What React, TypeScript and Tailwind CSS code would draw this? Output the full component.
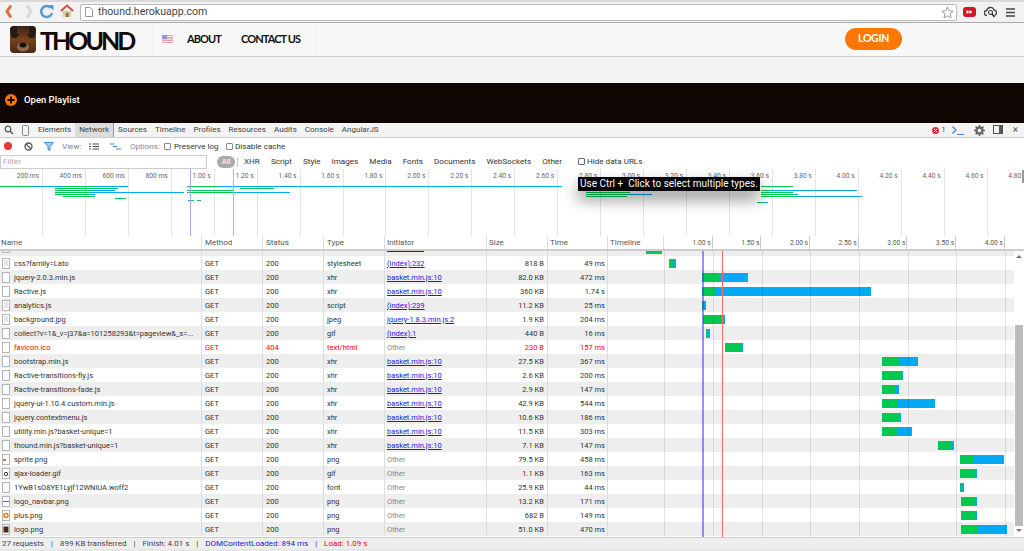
const UI_FONT = 'font-["Roboto",sans-serif]';

type Row = {
  name: string;
  status?: number;
  type: string;
  initiator: string;
  size: string;
  time: string;
  start: number;
  green: number;
  end: number;
  icon?: 'lines' | 'sprite' | 'loader' | 'navbar' | 'plus' | 'logo';
};

const ROWS: Row[] = [
  { name: 'css?family=Lato', type: 'stylesheet', initiator: '(index):232', size: '818 B', time: '49 ms', start: 669, green: 674, end: 676, icon: 'lines' },
  { name: 'jquery-2.0.3.min.js', type: 'xhr', initiator: 'basket.min.js:10', size: '82.0 KB', time: '472 ms', start: 702, green: 720, end: 748 },
  { name: 'Ractive.js', type: 'xhr', initiator: 'basket.min.js:10', size: '360 KB', time: '1.74 s', start: 702, green: 716, end: 871 },
  { name: 'analytics.js', type: 'script', initiator: '(index):239', size: '11.2 KB', time: '25 ms', start: 702, green: 703, end: 706, icon: 'lines' },
  { name: 'background.jpg', type: 'jpeg', initiator: 'jquery-1.8.3.min.js:2', size: '1.9 KB', time: '204 ms', start: 703, green: 723, end: 725, icon: 'lines' },
  { name: 'collect?v=1&_v=j37&a=101258293&t=pageview&_s=...', type: 'gif', initiator: '(index):1', size: '440 B', time: '16 ms', start: 706, green: 707, end: 710 },
  { name: 'favicon.ico', status: 404, type: 'text/html', initiator: 'Other', size: '230 B', time: '157 ms', start: 725, green: 742, end: 743 },
  { name: 'bootstrap.min.js', type: 'xhr', initiator: 'basket.min.js:10', size: '27.5 KB', time: '367 ms', start: 882, green: 900, end: 918 },
  { name: 'Ractive-transitions-fly.js', type: 'xhr', initiator: 'basket.min.js:10', size: '2.6 KB', time: '200 ms', start: 882, green: 901, end: 903 },
  { name: 'Ractive-transitions-fade.js', type: 'xhr', initiator: 'basket.min.js:10', size: '2.9 KB', time: '147 ms', start: 882, green: 896, end: 899 },
  { name: 'jquery-ui-1.10.4.custom.min.js', type: 'xhr', initiator: 'basket.min.js:10', size: '42.9 KB', time: '544 ms', start: 882, green: 897, end: 935 },
  { name: 'jquery.contextmenu.js', type: 'xhr', initiator: 'basket.min.js:10', size: '10.6 KB', time: '186 ms', start: 882, green: 899, end: 901 },
  { name: 'utility.min.js?basket-unique=1', type: 'xhr', initiator: 'basket.min.js:10', size: '11.5 KB', time: '303 ms', start: 882, green: 898, end: 912 },
  { name: 'thound.min.js?basket-unique=1', type: 'xhr', initiator: 'basket.min.js:10', size: '7.1 KB', time: '147 ms', start: 938, green: 952, end: 954 },
  { name: 'sprite.png', type: 'png', initiator: 'Other', size: '79.5 KB', time: '458 ms', start: 960, green: 973, end: 1004, icon: 'sprite' },
  { name: 'ajax-loader.gif', type: 'gif', initiator: 'Other', size: '1.1 KB', time: '163 ms', start: 960, green: 975, end: 977, icon: 'loader' },
  { name: '1YwB1sO8YE1Lyjf12WNiUA.woff2', type: 'font', initiator: 'Other', size: '25.9 KB', time: '44 ms', start: 960, green: 961, end: 964 },
  { name: 'logo_navbar.png', type: 'png', initiator: 'Other', size: '13.2 KB', time: '171 ms', start: 961, green: 975, end: 977, icon: 'navbar' },
  { name: 'plus.png', type: 'png', initiator: 'Other', size: '682 B', time: '149 ms', start: 961, green: 975, end: 977, icon: 'plus' },
  { name: 'logo.png', type: 'png', initiator: 'Other', size: '51.0 KB', time: '470 ms', start: 961, green: 978, end: 1007, icon: 'logo' },
];

const TABS = ['Elements', 'Network', 'Sources', 'Timeline', 'Profiles', 'Resources', 'Audits', 'Console', 'AngularJS'];
const TYPES = ['XHR', 'Script', 'Style', 'Images', 'Media', 'Fonts', 'Documents', 'WebSockets', 'Other'];

const OVERVIEW_LABELS = Array.from({ length: 24 }, (_, i) => {
  const ms = (i + 1) * 200;
  return ms < 1000 ? `${ms} ms` : `${(ms / 1000).toFixed(2)} s`;
});

// y, x1, x2, colour of the overview strokes
const G = '#00c853';
const B = '#03a9f4';
const OVERVIEW_STROKES: [number, number, number, string][] = [
  [186, 0, 32, G], [186, 32, 128, B], [186, 63, 93, G], [186, 187, 562, B], [186, 187, 218, G],
  [188, 55, 118, B], [188, 55, 115, G], [188, 240, 274, G],
  [190, 55, 115, B], [190, 55, 90, G], [190, 187, 233, G],
  [192, 55, 184, B], [192, 55, 90, G], [192, 187, 290, B], [192, 187, 233, G], [192, 586, 630, B], [192, 586, 630, G],
  [194, 55, 95, B], [194, 55, 90, G], [194, 586, 652, B], [194, 586, 627, G],
  [196, 63, 95, G], [196, 586, 627, G],
  [198, 115, 126, G], [200, 188, 194, G], [200, 197, 201, G],
  [186, 761, 793, G], [190, 761, 857, B], [190, 761, 772, G], [192, 761, 793, G], [194, 761, 798, B], [194, 761, 793, G],
  [196, 761, 862, B], [196, 761, 798, G], [202, 762, 768, B], [202, 757, 762, G],
];

const WATERFALL_LABELS = ['1.00 s', '1.50 s', '2.00 s', '2.50 s', '3.00 s', '3.50 s', '4.00 s'];
const WATERFALL_GRID = [664, 713, 762, 810, 859, 908, 956, 1005];

function FileIcon({ kind }: { kind?: Row['icon'] }) {
  return (
    <svg width="9" height="11" viewBox="0 0 9 11" className="shrink-0">
      <rect x="0.5" y="0.5" width="7" height="10" fill="#fff" stroke="#b5b5b5" />
      {kind === 'lines' && (
        <path d="M2 3h4M2 5h4M2 7h4" stroke="#ccc" />
      )}
      {kind === 'sprite' && <path d="M1 6h3" stroke="#e03030" strokeWidth="1.5" />}
      {kind === 'loader' && <circle cx="4" cy="6" r="1.7" fill="none" stroke="#333" />}
      {kind === 'navbar' && <path d="M1 5.5h6" stroke="#666" />}
      {kind === 'plus' && <circle cx="4" cy="5.5" r="2" fill="none" stroke="#f57c00" strokeWidth="1.5" />}
      {kind === 'logo' && <rect x="1.5" y="2.5" width="5" height="6" fill="#4a2a12" />}
    </svg>
  );
}

function BrowserBar() {
  return (
    <div className="flex h-[23px] shrink-0 items-center border-b border-[#aaa] border-t-2 border-t-[#d9d9d9] bg-[#f2f2f2]">
      <div className="flex w-[80px] shrink-0 items-center">
        <svg width="80" height="20" viewBox="0 0 80 20">
          <path d="M11 3.5 7 9.5l4 6" fill="none" stroke="#d9733f" strokeWidth="3" />
          <path d="M27 3.5l4 6-4 6" fill="none" stroke="#d8d8d8" strokeWidth="3" />
          <path d="M51 6a5.5 5.5 0 1 0 1 5" fill="none" stroke="#5b9bd5" strokeWidth="2.6" />
          <path d="M48 3l5.5 0 0 5.5z" fill="#5b9bd5" />
          <path d="M61 9l6-5.500 6 5.500" fill="none" stroke="#c9503c" strokeWidth="2" />
          <rect x="63" y="9" width="8" height="6" fill="#d9c9a8" />
          <rect x="66" y="11" width="2.500" height="4" fill="#8a6a3a" />
        </svg>
      </div>
      <div className="flex h-[17px] w-[877px] shrink-0 items-center rounded-[2px] border border-[#bbb] bg-white pl-[4px] pr-[1px]">
        <svg width="8" height="10" viewBox="0 0 8 10" className="mr-[5px] shrink-0">
          <path d="M.5.500h4.500l2.500 2.500v6.500h-7z" fill="#fff" stroke="#999" />
        </svg>
        <span className='font-["Roboto",sans-serif] text-[10.600px] leading-none text-[#444]'>thound.herokuapp.com</span>
        <svg width="13" height="13" viewBox="0 0 24 24" className="ml-auto mr-[1px]">
          <path d="m12 2 3 7 7.500.7-5.700 5 1.700 7.300-6.500-3.900L5.500 22l1.700-7.300-5.700-5L9 9z" fill="#fff" stroke="#888" strokeWidth="1.500" />
        </svg>
      </div>
      <div className="ml-[6px] flex items-center">
        <svg width="13" height="10" viewBox="0 0 13 10">
          <rect width="13" height="10" rx="3" fill="#d3142a" />
          <path d="M3.500 3v4l3-2zM6.500 3v4l3-2z" fill="#fff" />
        </svg>
        <svg width="13" height="12" viewBox="0 0 13 12" className="ml-[8px]">
          <path d="M3 9.500a2.500 2.500 0 0 1-.3-5 3.800 3.800 0 0 1 7.300-.5 2.700 2.700 0 0 1 .5 5.300" fill="none" stroke="#444" strokeWidth="1.300" />
          <circle cx="6.500" cy="6.500" r="2" fill="none" stroke="#444" strokeWidth="1.200" />
          <path d="m8 8 2.500 3" stroke="#222" strokeWidth="1.300" />
        </svg>
        <svg width="9" height="9" viewBox="0 0 9 9" className="ml-[9px]">
          <path d="M0 1h9M0 4.500h9M0 8h9" stroke="#444" strokeWidth="1.700" />
        </svg>
      </div>
    </div>
  );
}

function SiteHeader() {
  return (
    <>
      <div className="flex h-[34px] shrink-0 items-center border-b border-[#ccc] bg-[#f8f8f8] font-['Lato',sans-serif]">
        <div className="flex h-full w-[153px] shrink-0 items-center border-r border-[#f2f2f2] pl-[10px]">
          <svg width="26" height="27" viewBox="0 0 26 27" className="shrink-0">
            <defs>
              <linearGradient id="dog" x1="0" y1="0" x2="0" y2="1">
                <stop offset="0" stopColor="#3a2415" />
                <stop offset="0.5" stopColor="#7a421c" />
                <stop offset="1" stopColor="#4a2812" />
              </linearGradient>
            </defs>
            <rect width="26" height="27" rx="4" fill="url(#dog)" />
            <path d="M0 4q0-4 4-4h3v12H2z" fill="#2a1a10" />
            <path d="M26 4q0-4-4-4h-3v12h5z" fill="#2a1a10" />
            <ellipse cx="13" cy="21" rx="6" ry="4.500" fill="#8a6a50" />
            <ellipse cx="13" cy="19" rx="3.500" ry="2.500" fill="#111" />
            <circle cx="8" cy="9" r="1" fill="#111" />
            <circle cx="18" cy="9" r="1" fill="#111" />
          </svg>
          <span className="ml-[4px] pt-[2px] text-[25px] font-bold leading-none tracking-[-3px] text-[#120806]">THOUND</span>
        </div>
        <div className="flex h-full w-[164px] shrink-0 items-center border-r border-[#f2f2f2] pb-[1px] pl-[9px] text-[11px] font-bold tracking-[-0.9px] text-[#111]">
          <svg width="11" height="8" viewBox="0 0 11 8" className="shrink-0">
            <rect width="11" height="8" fill="#e8a0a0" />
            <path d="M0 1.500h11M0 4h11M0 6.500h11" stroke="#f5f0f0" />
            <rect width="5" height="4" fill="#8a9ad0" />
          </svg>
          <span className="ml-[14px]">ABOUT</span>
          <span className="ml-[20px]">CONTACT US</span>
        </div>
        <div className="ml-[528px] mb-[1px] flex h-[22px] w-[57px] items-center justify-center rounded-full bg-[#ff7600] text-[10.500px] font-bold tracking-[-0.3px] text-white">
          LOGIN
        </div>
      </div>
      <div className="h-[26px] shrink-0 bg-[#f3f3f3]" />
      <div className="flex h-[40px] shrink-0 items-center bg-[#100604] pb-[6px] pl-[5px] font-['Roboto',sans-serif]">
        <svg width="12" height="12" viewBox="0 0 12 12">
          <circle cx="6" cy="6" r="6" fill="#f57600" />
          <path d="M6 2.500v7M2.500 6h7" stroke="#100604" strokeWidth="1.800" />
        </svg>
        <span className="ml-[7px] text-[9.500px] font-medium text-white">Open Playlist</span>
      </div>
    </>
  );
}

function TabBar() {
  return (
    <div className="flex h-[15px] shrink-0 items-center border-b border-[#ccc] bg-[#f3f3f3] text-[8px] text-[#444]">
      <svg width="10" height="10" viewBox="0 0 10 10" className="ml-[4px] shrink-0">
        <circle cx="4" cy="4" r="2.800" fill="none" stroke="#555" strokeWidth="1.200" />
        <path d="m6 6 3 3" stroke="#555" strokeWidth="1.400" />
      </svg>
      <svg width="7" height="11" viewBox="0 0 7 11" className="ml-[8px] shrink-0">
        <rect x="0.500" y="0.500" width="6" height="10" rx="1" fill="none" stroke="#888" />
      </svg>
      <div className="ml-[9px] flex h-full items-center">
        {TABS.map((tab) => (
          <span
            key={tab}
            className={
              tab === 'Network'
                ? '-ml-[4px] mr-[4px] flex h-full items-center border-r border-[#999] bg-[#dcdcdc] px-[4px]'
                : 'mr-[8px] flex h-full items-center'
            }
          >
            {tab}
          </span>
        ))}
      </div>
      <div className="ml-auto flex items-center pr-[6px]">
        <svg width="7" height="7" viewBox="0 0 7 7">
          <circle cx="3.500" cy="3.500" r="3.500" fill="#e0303a" />
          <path d="m2 2 3 3M5 2 2 5" stroke="#fff" />
        </svg>
        <span className="ml-[2px] text-[#555]">1</span>
        <svg width="12" height="9" viewBox="0 0 12 9" className="ml-[6px]">
          <path d="m.5.500 3.500 3.500L.5 7.500" fill="none" stroke="#3f7fe0" strokeWidth="1.200" />
          <path d="M5 8.500h7" stroke="#3f7fe0" />
        </svg>
        <svg width="11" height="11" viewBox="0 0 11 11" className="ml-[10px]">
          <circle cx="5.500" cy="5.500" r="3" fill="none" stroke="#666" strokeWidth="2.400" />
          <path d="M5.500 0v2M5.500 9v2M0 5.500h2M9 5.500h2M1.600 1.600 3 3M8 8l1.400 1.400M9.400 1.600 8 3M3 8 1.600 9.400" stroke="#666" strokeWidth="1.500" />
        </svg>
        <svg width="10" height="10" viewBox="0 0 10 10" className="ml-[8px]">
          <rect x="0.500" y="0.500" width="9" height="8" fill="none" stroke="#555" />
          <rect x="6" y="1" width="3" height="7" fill="#555" />
        </svg>
        <span className="ml-[10px] text-[10px] leading-none text-[#555]">×</span>
      </div>
    </div>
  );
}

function ToolBar() {
  return (
    <div className="flex h-[16px] shrink-0 items-center whitespace-nowrap bg-white text-[8.100px] text-[#333]">
      <span className="ml-[4px] h-[8px] w-[8px] shrink-0 rounded-full bg-[#e53935]" />
      <svg width="9" height="9" viewBox="0 0 9 9" className="ml-[12px] shrink-0">
        <circle cx="4.500" cy="4.500" r="3.500" fill="none" stroke="#555" strokeWidth="1.300" />
        <path d="m2 2 5 5" stroke="#555" strokeWidth="1.300" />
      </svg>
      <svg width="10" height="9" viewBox="0 0 10 9" className="ml-[11px] shrink-0">
        <path d="M.5.500h9L6 4.500V8.500L4 7.500v-3z" fill="#a8cdf0" stroke="#3f8fe0" />
      </svg>
      <span className="ml-[8px] w-[20px] shrink-0 text-[#888]">View:</span>
      <svg width="10" height="7" viewBox="0 0 10 7" className="ml-[7px] shrink-0">
        <path d="M0 1h2M0 3.500h2M0 6h2M3.500 1H10M3.500 3.500H10M3.500 6H10" stroke="#444" strokeWidth="1.200" />
      </svg>
      <svg width="11" height="7" viewBox="0 0 11 7" className="ml-[11px] shrink-0">
        <path d="M0 1h4M3 3.500h4M6 6h5" stroke="#3f7fe0" strokeWidth="1.200" />
      </svg>
      <span className="ml-[9px] w-[30px] shrink-0 text-[#888]">Options:</span>
      <span className="ml-[4px] h-[7px] w-[7px] shrink-0 rounded-[1px] border border-[#888]" />
      <span className="ml-[3px] w-[45px] shrink-0">Preserve log</span>
      <span className="ml-[7px] h-[7px] w-[7px] shrink-0 rounded-[1px] border border-[#888]" />
      <span className="ml-[2px]">Disable cache</span>
    </div>
  );
}

function FilterBar() {
  return (
    <div className="flex h-[15px] shrink-0 items-center bg-white text-[8.100px] text-[#333]">
      <div className="flex h-[14px] w-[207px] shrink-0 items-center border border-[#ccc] pl-[2px] text-[#aaa]">Filter</div>
      <span className="ml-[10px] flex h-[12px] w-[18px] shrink-0 items-center justify-center rounded-full bg-[#aaa] text-white">All</span>
      <span className="ml-[2px] h-[10px] w-px shrink-0 bg-[#ccc]" />
      <div className="ml-[6px] flex w-[318px] shrink-0 justify-between">
        {TYPES.map((t) => (
          <span key={t}>{t}</span>
        ))}
      </div>
      <span className="ml-[16px] h-[7px] w-[7px] shrink-0 rounded-[1px] border border-[#666]" />
      <span className="ml-[2px]">Hide data URLs</span>
    </div>
  );
}

function Overview() {
  return (
    <div className="relative h-[67px] shrink-0 overflow-hidden bg-white text-[6.700px] text-[#666]">
      <div className="flex h-full w-[1100px]">
        {OVERVIEW_LABELS.map((label) => (
          <div key={label} className="h-full w-[42.950px] shrink-0 border-r border-[#e4e4e4] pr-[3px] pt-[4px] text-right">
            {label}
          </div>
        ))}
      </div>
      <svg width="1024" height="67" viewBox="0 169 1024 67" className="absolute inset-0">
        {OVERVIEW_STROKES.map(([y, x1, x2, c], i) => (
          <rect key={i} x={x1} y={y} width={x2 - x1} height="1" fill={c} />
        ))}
        <rect x="190" y="169" width="1" height="67" fill="#a8a8f5" />
        <rect x="233" y="169" width="1" height="67" fill="#f0a0a0" />
      </svg>
      <div className="absolute right-0 top-[1px] h-[13px] w-[2px] bg-[#999]" />
      <div className="absolute left-[578px] top-[8px] w-[182px] whitespace-nowrap bg-black px-[2px] py-[1px] text-[10px] leading-[12px] text-white shadow-[0_8px_16px_rgba(0,0,0,0.45)]">
        Use Ctrl +&nbsp; Click to select multiple types.
      </div>
    </div>
  );
}

function TableHeader() {
  const cols: [string, string][] = [
    ['Name', 'w-[202px] pl-[1px]'],
    ['Method', 'w-[61px] pl-[3px]'],
    ['Status', 'w-[61px] pl-[3px]'],
    ['Type', 'w-[61px] pl-[3px]'],
    ['Initiator', 'w-[102px] pl-[2px]'],
    ['Size', 'w-[61px] pl-[2px]'],
    ['Time', 'w-[60px] pl-[2px]'],
    ['Timeline', 'w-[56px] pl-[2px]'],
  ];
  return (
    <div className="flex h-[15px] shrink-0 items-center border-b-2 border-[#ccc] bg-white text-[8px] text-[#555]">
      {cols.map(([label, cls]) => (
        <div key={label} className={`${cls} flex h-full shrink-0 items-center border-r border-[#ddd] pt-[1px]`}>
          {label}
        </div>
      ))}
      <div className="flex h-full flex-1 text-[6.700px] text-[#555]">
        {WATERFALL_LABELS.map((l) => (
          <div key={l} className="flex h-full w-[48.700px] shrink-0 items-center justify-end border-r border-[#ccc] pr-[1px] pt-[2px]">
            {l}
          </div>
        ))}
      </div>
    </div>
  );
}

const ROW_GRID = 'grid grid-cols-[202px_61px_61px_61px_102px_61px_60px_406px] items-center';
const CELL = 'flex h-full items-center border-r border-[#ddd] pt-[1px]';

function RequestRow({ row, striped }: { row: Row; striped: boolean }) {
  const failed = row.status === 404;
  const text = failed ? 'text-[#f00]' : 'text-[#333]';
  const isLink = row.initiator !== 'Other';
  return (
    <div className={`${ROW_GRID} h-[14px] ${striped ? 'bg-[#eee]' : 'bg-white'} ${text}`}>
      <div className="flex h-full items-center gap-[3px] border-r border-[#ddd] pl-[2px]">
        <FileIcon kind={row.icon} />
        <span className="whitespace-nowrap pt-[1px] leading-[13px]">{row.name}</span>
      </div>
      <div className={`${CELL} pl-[3px]`}>GET</div>
      <div className={`${CELL} pl-[3px]`}>{row.status ?? 200}</div>
      <div className={`${CELL} pl-[3px]`}>{row.type}</div>
      <div className={`${CELL} pl-[2px]`}>
        {isLink ? <span className="text-[#1a1ae0] underline">{row.initiator}</span> : <span className="text-[#888]">{row.initiator}</span>}
      </div>
      <div className={`${CELL} justify-end pr-[3px]`}>{row.size}</div>
      <div className={`${CELL} justify-end pr-[2px]`}>{row.time}</div>
      <div className="flex h-full items-center">
        <div className="flex h-[9px]" style={{ marginLeft: row.start - 608 }}>
          <div className="h-full bg-[#00c853]" style={{ width: row.green - row.start }} />
          <div className="h-full bg-[#03a9f4]" style={{ width: row.end - row.green }} />
        </div>
      </div>
    </div>
  );
}

function PartialRow() {
  return (
    <div className={`${ROW_GRID} h-[5px] items-start overflow-hidden bg-[#eee]`}>
      <div className="h-full border-r border-[#ddd] pl-[2px]">
        <div className="h-[2px] w-[8px] border-x border-b border-[#b5b5b5]" />
      </div>
      <div className="h-full border-r border-[#ddd]" />
      <div className="h-full border-r border-[#ddd]" />
      <div className="h-full border-r border-[#ddd]" />
      <div className="h-full border-r border-[#ddd] pl-[2px]">
        <div className="h-px w-[37px] bg-[#1a1ae0]" />
      </div>
      <div className="h-full border-r border-[#ddd]" />
      <div className="h-full border-r border-[#ddd]" />
      <div className="ml-[38px] flex h-[3px] w-[16px]">
        <div className="h-full w-[15px] bg-[#00c853]" />
        <div className="h-full w-[1px] bg-[#03a9f4]" />
      </div>
    </div>
  );
}

function RequestTable() {
  return (
    <div className="relative flex h-[286px] shrink-0 bg-white">
      <div className="w-[1014px] shrink-0 overflow-hidden">
        <PartialRow />
        {ROWS.map((row, i) => (
          <RequestRow key={row.name} row={row} striped={i % 2 === 1} />
        ))}
        <div className="h-[1px]" />
      </div>
      <div className="flex w-[10px] shrink-0 flex-col items-center bg-white">
        <span className="mt-[4px] h-0 w-0 border-x-[3px] border-b-[3px] border-x-transparent border-b-[#777]" />
        <div className="mt-[67px] h-[201px] w-[8px] bg-[#bbb]" />
        <span className="mt-[3px] h-0 w-0 border-x-[3px] border-t-[3px] border-x-transparent border-t-[#777]" />
      </div>
      <svg width="1024" height="286" viewBox="0 251 1024 286" className="pointer-events-none absolute inset-0">
        {WATERFALL_GRID.map((x) => (
          <rect key={x} x={x} y="251" width="1" height="286" fill="rgba(0,0,0,0.1)" />
        ))}
        <rect x="702" y="251" width="2" height="286" fill="rgba(60,60,230,0.55)" />
        <rect x="722" y="251" width="1" height="286" fill="#ff6b6b" />
      </svg>
    </div>
  );
}

function Footer() {
  return (
    <div className="flex h-[12px] shrink-0 items-center whitespace-pre border-t border-[#ccc] bg-[#eee] pl-[2px] text-[8px] text-[#444]">
      <span>27 requests</span>
      <span className="mx-[7px]">|</span>
      <span>899 KB transferred</span>
      <span className="mx-[7px]">|</span>
      <span>Finish: 4.01 s</span>
      <span className="mx-[7px]">|</span>
      <span className="text-[#1a1ae0]">DOMContentLoaded: 894 ms</span>
      <span className="mx-[7px]">|</span>
      <span className="text-[#f00]">Load: 1.09 s</span>
    </div>
  );
}

export default function App() {
  return (
    <div className="flex h-[551px] w-[1024px] flex-col overflow-hidden bg-[#e6e6e6]">
      <BrowserBar />
      <SiteHeader />
      <div className={`flex flex-col text-[8.500px] leading-none ${UI_FONT}`}>
        <TabBar />
        <ToolBar />
        <FilterBar />
        <Overview />
        <TableHeader />
        <div className="text-[7.500px]">
          <RequestTable />
        </div>
        <Footer />
      </div>
    </div>
  );
}
